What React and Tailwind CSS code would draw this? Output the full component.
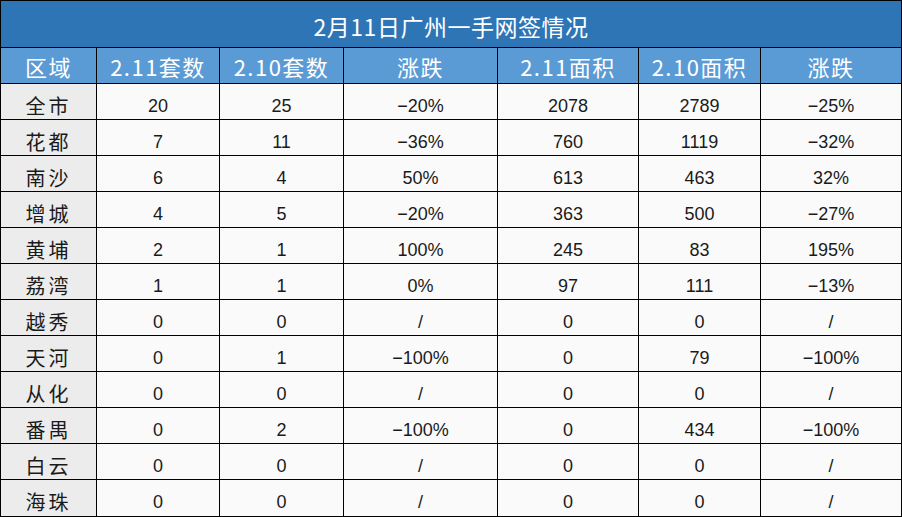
const heads = ["区域", "2.11套数", "2.10套数", "涨跌", "2.11面积", "2.10面积", "涨跌"];

const rows = [
  ["全市", "20", "25", "−20%", "2078", "2789", "−25%"],
  ["花都", "7", "11", "−36%", "760", "1119", "−32%"],
  ["南沙", "6", "4", "50%", "613", "463", "32%"],
  ["增城", "4", "5", "−20%", "363", "500", "−27%"],
  ["黄埔", "2", "1", "100%", "245", "83", "195%"],
  ["荔湾", "1", "1", "0%", "97", "111", "−13%"],
  ["越秀", "0", "0", "/", "0", "0", "/"],
  ["天河", "0", "1", "−100%", "0", "79", "−100%"],
  ["从化", "0", "0", "/", "0", "0", "/"],
  ["番禺", "0", "2", "−100%", "0", "434", "−100%"],
  ["白云", "0", "0", "/", "0", "0", "/"],
  ["海珠", "0", "0", "/", "0", "0", "/"],
];

const cols = "grid grid-cols-[96px_123px_124px_154px_141px_122px_140px]";

export default function App() {
  return (
    <div className="w-[902px] h-[517px] bg-white font-['Liberation_Sans','Noto_Sans_CJK_SC',sans-serif]">
      <div className="border border-black">
        {/* Title */}
        <div className="flex h-[47px] items-center justify-center border-b border-black bg-[#2e75b6] pt-1 text-[23px] leading-none text-white font-['Noto_Sans_CJK_SC',sans-serif] tracking-[0.5px]">
          2月11日广州一手网签情况
        </div>

        {/* Header */}
        <div className={`${cols} h-9 bg-[#5b9bd5] border-b border-black`}>
          {heads.map((h, i) => (
            <div
              key={i}
              className={`flex items-center justify-center text-[22px] leading-none text-white font-['Noto_Sans_CJK_SC',sans-serif] tracking-[1.5px] ${i < 6 ? "border-r border-black" : ""}`}
            >
              {h}
            </div>
          ))}
        </div>

        {/* Rows */}
        {rows.map((r, ri) => (
          <div key={ri} className={`${cols} h-9 ${ri < rows.length - 1 ? "border-b border-black" : ""}`}>
            {r.map((c, ci) => (
              <div
                key={ci}
                className={`flex items-center justify-center pt-2 leading-none text-[#1a1a1a] ${ci < 6 ? "border-r border-black" : ""} ${
                  ci === 0
                    ? "bg-[#ececec] text-[20px] tracking-[3px] font-['Noto_Sans_CJK_SC',sans-serif]"
                    : "bg-[#fafafa] text-[18px]"
                }`}
              >
                {c}
              </div>
            ))}
          </div>
        ))}
      </div>
    </div>
  );
}
